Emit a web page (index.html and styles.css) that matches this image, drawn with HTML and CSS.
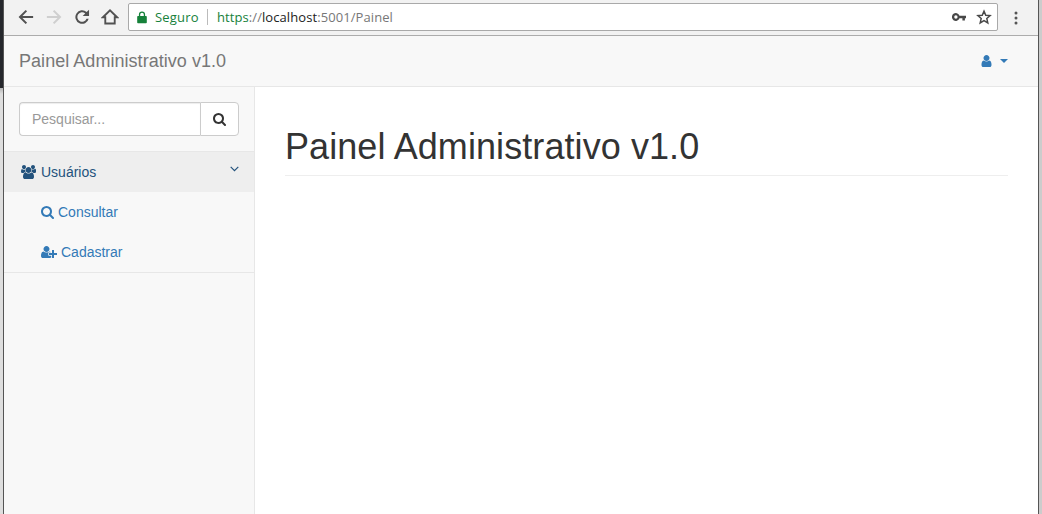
FILE: index.html
```html
<!DOCTYPE html>
<html lang="pt-BR">
<head>
<meta charset="utf-8">
<title>Painel Administrativo v1.0</title>
<link rel="stylesheet" href="styles.css">
</head>
<body>
<div class="desktop">
<div class="edge-left"></div>
<div class="window">
  <header class="toolbar">
    <nav class="nav-buttons">
      <svg class="tool" viewBox="0 0 24 24"><path class="arrow" d="M21.500 12H4.500M12.500 3.500L4 12l8.500 8.500"/></svg>
      <svg class="tool" viewBox="0 0 24 24"><path class="arrow disabled" d="M2.500 12h17M11.500 3.500L20 12l-8.500 8.500"/></svg>
      <svg class="tool" viewBox="0 0 24 24"><path d="M18.200 5.400A9 9 0 1 0 20.900 14.300h-2.900a6.300 6.300 0 1 1-1.700-7L12.900 10.700H21.400V2.300z"/></svg>
      <svg class="tool" viewBox="0 0 24 24"><path class="outline" d="M5.700 12.300H2.600L12 3l9.400 9.300h-3.100v8.300H5.700z"/></svg>
    </nav>
    <div class="address">
      <svg class="lock" viewBox="0 0 10 13"><path fill-rule="evenodd" d="M1.900 5V3.600a3.100 3.100 0 0 1 6.200 0V5H9a.8.8 0 0 1 .8.800v5.700a.8.8 0 0 1-.8.800H1a.8.8 0 0 1-.8-.8V5.800A.8.8 0 0 1 1 5zM3.200 5h3.600V3.600a1.800 1.800 0 0 0-3.600 0z"/></svg>
      <span class="secure">Seguro</span>
      <span class="divider"></span>
      <span class="url"><span class="scheme">https</span>://<span class="host">localhost</span>:5001/Painel</span>
      <svg class="key" viewBox="0 0 14 8"><path fill-rule="evenodd" d="M7.500 2.700H14v2.600h-1.100V7.400h-2.500V5.300H7.500a3.900 3.900 0 1 1 0-2.600zM3.900 2.300a1.700 1.700 0 1 0 0 3.400 1.700 1.700 0 0 0 0-3.400z"/></svg>
      <svg class="star" viewBox="0 0 24 24"><path d="M12 3.200l2.600 6.100 6.600.6-5 4.400 1.500 6.500-5.700-3.400-5.700 3.400 1.500-6.500-5-4.400 6.600-.6z"/></svg>
    </div>
    <svg class="more" viewBox="0 0 4 14"><circle cx="2" cy="2" r="1.500"/><circle cx="2" cy="7" r="1.500"/><circle cx="2" cy="12" r="1.500"/></svg>
  </header>
  <div class="navbar">
    <a class="brand">Painel Administrativo v1.0</a>
    <a class="account">
      <svg class="fa user" viewBox="0 0 1280 1792"><path d="M1280 1399q0 109-62.500 187t-150.500 78h-854q-88 0-150.500-78t-62.500-187q0-85 8.500-160.500t31.500-152 58.500-131 94-89 134.500-34.500q131 128 313 128t313-128q76 0 134.500 34.500t94 89 58.500 131 31.500 152 8.500 160.500zm-256-887q0 159-112.500 271.500t-271.500 112.500-271.500-112.500-112.500-271.500 112.500-271.500 271.500-112.500 271.500 112.500 112.500 271.500z"/></svg>
      <span class="caret"></span>
    </a>
  </div>
  <div class="body">
    <aside class="sidebar">
      <div class="search">
        <input class="search-input" type="text" placeholder="Pesquisar...">
        <button class="search-button" type="button" aria-label="Pesquisar"><svg class="fa magnifier" viewBox="0 0 1664 1792"><path d="M1152 832q0-185-131.500-316.500t-316.500-131.500-316.500 131.500-131.500 316.500 131.500 316.500 316.500 131.500 316.500-131.500 131.500-316.500zm512 832q0 52-38 90t-90 38q-54 0-90-38l-343-342q-179 124-399 124-143 0-273.500-55.500t-225-150-150-225-55.500-273.500 55.500-273.500 150-225 225-150 273.500-55.500 273.500 55.500 225 150 150 225 55.500 273.500q0 220-124 399l343 343q37 37 37 90z"/></svg></button>
      </div>
      <a class="item active">
        <svg class="fa group" viewBox="0 0 1920 1792"><path d="M593 896q-162 5-265 128h-134q-82 0-138-40.500t-56-118.500q0-353 124-353 6 0 43.500 21t97.500 42.500 119 21.500q67 0 133-23-5 37-5 66 0 159 93 290zm1071 637q0 120-73 189.500t-194 69.500h-874q-121 0-194-69.500t-73-189.500q0-53 3.500-103.500t14-109 26.500-108.500 43-97.500 62-81 85.500-53.500 111.500-20q10 0 43 21.500t73 48 107 48 135 21.500 135-21.500 107-48 73-48 43-21.500q61 0 111.500 20t85.500 53.500 62 81 43 97.500 26.500 108.500 14 109 3.500 103.500zm-1024-1277q0 106-75 181t-181 75-181-75-75-181 75-181 181-75 181 75 75 181zm704 384q0 159-112.500 271.500t-271.500 112.500-271.500-112.500-112.500-271.500 112.500-271.500 271.500-112.500 271.500 112.500 112.500 271.500zm576 225q0 78-56 118.500t-138 40.500h-134q-103-123-265-128 93-131 93-290 0-29-5-66 66 23 133 23 59 0 119-21.500t97.500-42.500 43.500-21q124 0 124 353zm-128-609q0 106-75 181t-181 75-181-75-75-181 75-181 181-75 181 75 75 181z"/></svg>
        <span>Usuários</span>
        <svg class="chevron" viewBox="0 0 9 6"><path d="M.7.800l3.800 3.800L8.300.800"/></svg>
      </a>
      <a class="item sub">
        <svg class="fa magnifier" viewBox="0 0 1664 1792"><path d="M1152 832q0-185-131.500-316.500t-316.500-131.500-316.500 131.500-131.500 316.500 131.500 316.500 316.500 131.500 316.500-131.500 131.500-316.500zm512 832q0 52-38 90t-90 38q-54 0-90-38l-343-342q-179 124-399 124-143 0-273.500-55.500t-225-150-150-225-55.500-273.500 55.500-273.500 150-225 225-150 273.500-55.500 273.500 55.500 225 150 150 225 55.500 273.500q0 220-124 399l343 343q37 37 37 90z"/></svg>
        <span>Consultar</span>
      </a>
      <a class="item sub last">
        <svg class="fa user-plus" viewBox="0 0 2048 1792"><path d="M704 896q-159 0-271.500-112.500t-112.500-271.500 112.500-271.500 271.500-112.500 271.500 112.500 112.500 271.500-112.500 271.500-271.500 112.500zm960 128h352q13 0 22.500 9.500t9.500 22.500v192q0 13-9.500 22.500t-22.500 9.500h-352v352q0 13-9.500 22.500t-22.500 9.500h-192q-13 0-22.500-9.500t-9.500-22.500v-352h-352q-13 0-22.500-9.500t-9.500-22.500v-192q0-13 9.500-22.500t22.500-9.500h352v-352q0-13 9.500-22.500t22.500-9.500h192q13 0 22.500 9.500t9.500 22.500v352zm-736 224q0 52 38 90t90 38h256v238q-68 50-171 50h-874q-121 0-194-69t-73-190q0-53 3.500-103.500t14-109 26.500-108.500 43-97.500 62-81 85.500-53.500 111.500-20q19 0 39 17 79 61 154.500 91.500t164.500 30.500 164.500-30.500 154.500-91.500q20-17 39-17 132 0 217 96h-223q-52 0-90 38t-38 90v192z"/></svg>
        <span>Cadastrar</span>
      </a>
    </aside>
    <main class="content"><h1 class="title">Painel Administrativo v1.0</h1></main>
  </div>
</div>
</div>
</body>
</html>
```

FILE: styles.css
```css
* { box-sizing: border-box; }
body {
  margin: 0;
  font-family: "Liberation Sans", Arial, sans-serif;
  font-size: 14px;
  line-height: 20px;
  color: #333;
}
.desktop {
  display: flex;
  height: 514px;
  overflow: hidden;
  background: #ccc;
}
.edge-left {
  width: 3px;
  background: linear-gradient(#25272c 88px, #b4b4b4 88px, #dedede 94px);
}
.window {
  display: flex;
  flex-direction: column;
  width: 1036px;
  border: solid #555;
  border-width: 0 1px;
  background: #fff;
}
.toolbar {
  display: flex;
  align-items: flex-start;
  height: 36px;
  padding: 3px 20px 0 13px;
  background: #f2f2f2;
  border-bottom: 1px solid #acacac;
}
.nav-buttons {
  display: flex;
  gap: 10px;
  width: 111px;
  padding-top: 5px;
}
.tool { width: 18px; height: 18px; fill: #515151; }
.arrow { fill: none; stroke: #515151; stroke-width: 2.700; }
.disabled { stroke: #cfcfcf; }
.outline { fill: none; stroke: #515151; stroke-width: 2.500; }
.address {
  display: flex;
  align-items: center;
  width: 870px;
  height: 28px;
  padding: 0 5px 0 8px;
  border: 1px solid #a9a9a9;
  border-radius: 2px;
  background: #fff;
  font-family: "Open Sans", "Noto Sans", sans-serif;
  font-size: 13px;
}
.lock { width: 10px; height: 13px; fill: #16813a; }
.secure { width: 44px; margin-left: 8px; color: #16813a; letter-spacing: .2px; }
.divider { width: 1px; height: 16px; margin: 0 9px 0 8px; background: #bbb; }
.url { color: #777; letter-spacing: .08px; white-space: nowrap; }
.scheme { color: #16813a; }
.host { color: #222; }
.key { width: 14px; height: 8px; margin: 0 10px 0 auto; fill: #484848; }
.star { width: 16px; height: 16px; fill: none; stroke: #484848; stroke-width: 2.200; }
.more { width: 4px; height: 14px; margin: 8px 0 0 16px; fill: #555; }
.navbar {
  display: flex;
  justify-content: space-between;
  height: 51px;
  padding: 15px 30px 15px 15px;
  background: #f8f8f8;
  border-bottom: 1px solid #e7e7e7;
}
.brand { font-size: 18px; letter-spacing: .04px; color: #777; }
.account { display: flex; align-items: center; gap: 8px; color: #337ab7; }
.caret {
  border: 4px solid transparent;
  border-top-color: currentColor;
  border-bottom: 0;
}
.fa { height: 14px; fill: currentColor; }
.user { width: 11px; }
.group { width: 15px; }
.magnifier { width: 13px; }
.user-plus { width: 16px; }
.body { display: flex; flex: 1; }
.sidebar {
  width: 251px;
  background: #f8f8f8;
  border-right: 1px solid #e7e7e7;
}
.search {
  display: flex;
  height: 65px;
  padding: 15px;
  border-bottom: 1px solid #e7e7e7;
}
.search-input {
  width: 181px;
  height: 34px;
  padding: 6px 12px;
  border: 1px solid #ccc;
  border-right: 0;
  border-radius: 4px 0 0 4px;
  background: #fff;
  font: inherit;
  box-shadow: inset 0 1px 1px rgba(0, 0, 0, .075);
}
.search-input::placeholder { color: #999; }
.search-button {
  display: flex;
  align-items: center;
  justify-content: center;
  width: 39px;
  height: 34px;
  padding: 0 1px 0 0;
  border: 1px solid #ccc;
  border-radius: 0 4px 4px 0;
  background: #fff;
  color: #333;
}
.item {
  display: flex;
  align-items: center;
  gap: 4px;
  height: 40px;
  padding: 0 15px;
  color: #337ab7;
}
.active { gap: 5px; padding-left: 17px; background: #eee; color: #23527c; }
.chevron {
  width: 9px;
  height: 6px;
  margin: -6px 0 0 auto;
  fill: none;
  stroke: currentColor;
  stroke-width: 1.200;
}
.sub { padding-left: 37px; }
.last { height: 41px; border-bottom: 1px solid #e7e7e7; }
.content { flex: 1; padding: 0 30px; }
.title {
  margin: 40px 0 20px;
  padding-bottom: 8px;
  border-bottom: 1px solid #eee;
  font-size: 36px;
  font-weight: 400;
  line-height: 39.600px;
  letter-spacing: .08px;
}
```
